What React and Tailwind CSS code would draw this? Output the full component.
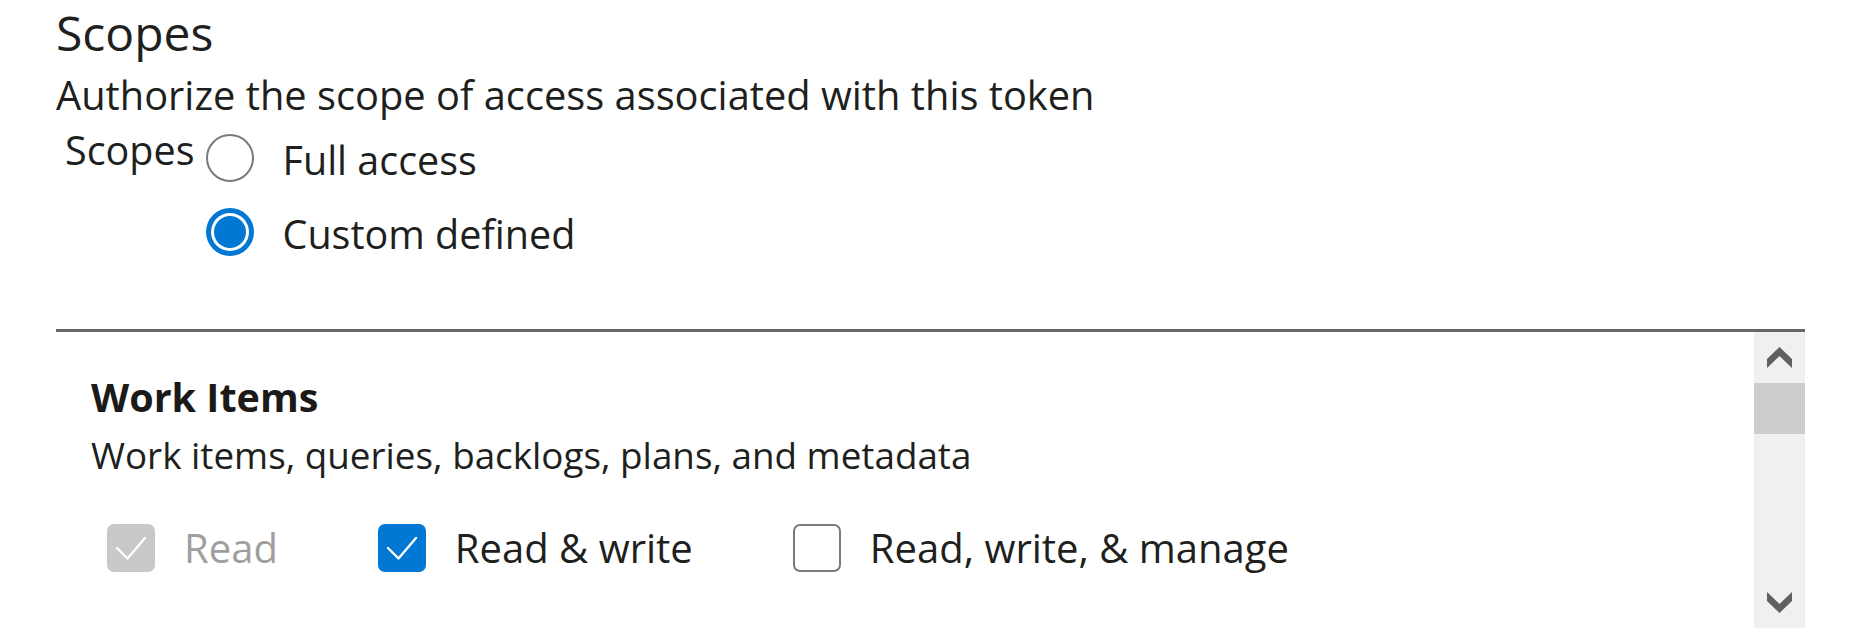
import React from "react";

function Check({ color = "#ffffff" }) {
  return (
    <svg width="48" height="48" viewBox="0 0 48 48" className="block">
      <polyline points="10,24 20.5,34.5 38,14" fill="none" stroke={color} strokeWidth="2.4" strokeLinecap="round" strokeLinejoin="round" />
    </svg>
  );
}

function Chevron({ down = false }) {
  return (
    <svg width="25" height="21" viewBox="0 0 25 21" className={down ? "block rotate-180" : "block"}>
      <polygon points="12.5,0 25,12 25,21 12.5,9 0,21 0,12" fill="#606060" />
    </svg>
  );
}

export default function App() {
  return (
    <div className="w-[1853px] h-[641px] bg-white font-['Open_Sans',sans-serif] text-[#201f1e] pl-[56px] pr-[48px] overflow-hidden">
      <h1 className="text-[48px] leading-[66px] font-normal">Scopes</h1>
      <p className="text-[39.8px] leading-[58px]">Authorize the scope of access associated with this token</p>
      <div className="flex items-start">
        <span className="ml-[9px] text-[39.5px] leading-[53px]">Scopes</span>
        <div className="ml-[11px] pt-[10px] flex flex-col gap-[22px]">
          <div className="flex items-start gap-[29px]">
            <span className="w-[48px] h-[48px] rounded-full border-[2.5px] border-[#7a7a7a] bg-white shrink-0" />
            <span className="text-[39.5px] leading-[52px]">Full access</span>
          </div>
          <div className="flex items-start gap-[29px]">
            <span className="w-[48px] h-[48px] rounded-full bg-[#0078d4] flex items-center justify-center shrink-0">
              <span className="w-[38px] h-[38px] rounded-full bg-white flex items-center justify-center">
                <span className="w-[32px] h-[32px] rounded-full bg-[#0078d4]" />
              </span>
            </span>
            <span className="text-[39.5px] leading-[52px]">Custom defined</span>
          </div>
        </div>
      </div>
      <div className="mt-[69px] border-t-[3px] border-[#666666] h-[299px] flex">
        <div className="flex-1 pl-[35px] pt-[37px]">
          <h2 className="text-[39.5px] leading-[56px] font-bold text-[#1b1a19]">Work Items</h2>
          <p className="mt-[2px] text-[36.8px] leading-[56px]">Work items, queries, backlogs, plans, and metadata</p>
          <div className="mt-[41px] pl-[16px] flex items-start gap-[100px]">
            <div className="flex items-start gap-[29px]">
              <span className="w-[48px] h-[48px] rounded-[7px] bg-[#c8c8c8] shrink-0">
                <Check />
              </span>
              <span className="text-[40px] leading-[48px] text-[#a19f9d]">Read</span>
            </div>
            <div className="flex items-start gap-[29px]">
              <span className="w-[48px] h-[48px] rounded-[7px] bg-[#0078d4] shrink-0">
                <Check />
              </span>
              <span className="text-[40px] leading-[48px]">Read &amp; write</span>
            </div>
            <div className="flex items-start gap-[29px]">
              <span className="w-[48px] h-[48px] rounded-[7px] border-[2.5px] border-[#7a7a7a] bg-white shrink-0" />
              <span className="text-[40px] leading-[48px]">Read, write, &amp; manage</span>
            </div>
          </div>
        </div>
        <div className="w-[51px] bg-[#f0f0f0] flex flex-col shrink-0">
          <div className="h-[51px] flex items-center justify-center">
            <Chevron />
          </div>
          <div className="h-[51px] bg-[#cdcdcd]" />
          <div className="flex-1" />
          <div className="h-[51px] flex items-center justify-center">
            <Chevron down />
          </div>
        </div>
      </div>
    </div>
  );
}
